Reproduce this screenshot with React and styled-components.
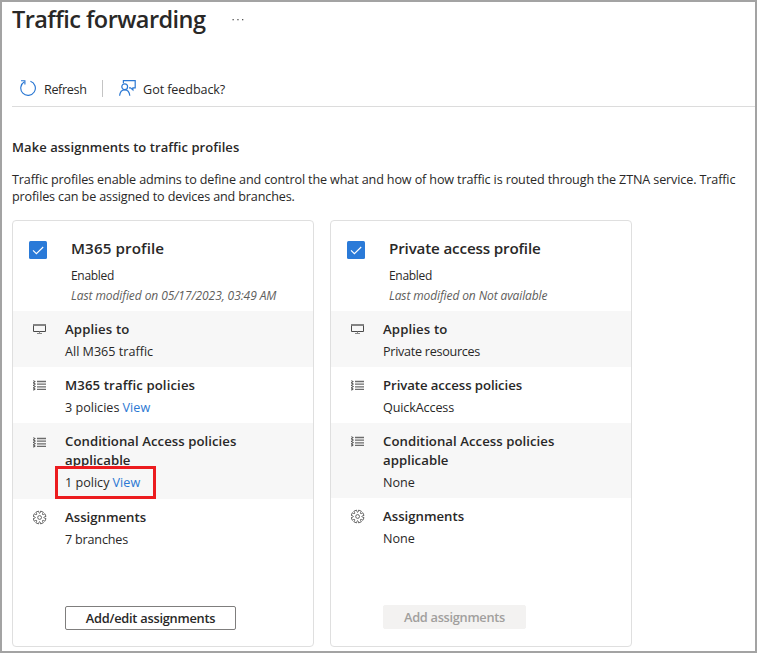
import React from 'react';
import styled, { createGlobalStyle } from 'styled-components';

const GlobalStyle = createGlobalStyle`
  * { box-sizing: border-box; }
  body { margin: 0; background: #fff; }
  button { font-family: inherit; }
`;

const Page = styled.main`
  width: 757px;
  height: 653px;
  border: 2px solid #a3a3a3;
  padding-left: 10px;
  overflow: hidden;
  color: #292827;
  font-family: 'Open Sans', 'Noto Sans', sans-serif;
`;

const Text = styled.span`
  display: block;
  white-space: nowrap;
  font-size: 12.6px;
  line-height: 18px;
  letter-spacing: ${(p) => p.$ls || 0}px;
`;

const TitleBar = styled.header`
  display: flex;
  height: 74px;
`;

const Title = styled.h1`
  margin: 0;
  width: 220px;
  font-size: 23.5px;
  line-height: 35px;
  font-weight: 600;
  letter-spacing: -0.56px;
  white-space: nowrap;
`;

const MoreIcon = styled.svg`
  display: block;
  margin-top: 16px;
`;

const Toolbar = styled.nav`
  display: flex;
  align-items: flex-start;
  height: 31px;
  padding: 3px 0 0 8px;
  border-bottom: 1px solid #dcdcdc;
`;

const ToolButton = styled.div`
  display: flex;
  gap: ${(p) => p.$gap}px;
  height: 18px;

  ${Text} { padding-top: 2px; }
  svg { display: block; flex: none; }
`;

const Divider = styled.div`
  width: 1px;
  height: 17px;
  margin: 1px 16px 0 15px;
  background: #c4c4c4;
`;

const SectionTitle = styled.h2`
  margin: 31px 0 15px;
  font-size: 13px;
  line-height: 18px;
  font-weight: 600;
  letter-spacing: 0.06px;
`;

const Intro = styled.div`
  ${Text} { line-height: 17px; }
`;

const Cards = styled.section`
  display: flex;
  gap: 16px;
  margin-top: 15px;
`;

const Card = styled.article`
  display: flex;
  flex-direction: column;
  width: 302px;
  height: 427px;
  border: 1px solid #dfdfdf;
  border-radius: 4px;
`;

const CardHeader = styled.div`
  display: flex;
  gap: 24px;
  height: 90px;
  padding: 17px 0 0 16px;
`;

const CheckBox = styled.div`
  width: 18px;
  height: 18px;
  margin-top: 3px;
  border-radius: 1.5px;
  background: #2a7ad8;

  svg { display: block; }
`;

const ProfileName = styled.h3`
  margin: 0 0 9px;
  font-size: 15.2px;
  line-height: 20px;
  font-weight: 600;
  white-space: nowrap;
  letter-spacing: ${(p) => p.$ls}px;
`;

const Status = styled(Text)`
  font-size: 12px;
`;

const Modified = styled(Text)`
  margin-top: 2px;
  font-size: 12px;
  font-style: italic;
  color: #605e5c;
`;

const Row = styled.div`
  display: flex;
  gap: 18px;
  padding: 9px 0 ${(p) => (p.$loose ? 7 : 6)}px 20px;
  background: ${(p) => (p.$shaded ? '#f7f7f7' : 'transparent')};
`;

const RowIcon = styled.svg`
  display: block;
  flex: none;
  margin-top: ${(p) => (p.$low ? 3 : 2)}px;
`;

const RowBody = styled.div`
  position: relative;
`;

const RowTitle = styled(Text)`
  font-size: 13.2px;
  line-height: 19px;
  font-weight: 600;
`;

const Value = styled.div`
  display: flex;
  gap: 3px;
  margin-top: 4px;
`;

const Link = styled(Text)`
  color: #2b78d3;
  letter-spacing: 0.1px;
`;

const Highlight = styled.div`
  position: absolute;
  left: -10px;
  bottom: -7px;
  width: 101px;
  height: 33px;
  border: 3px solid #ec1c1f;
`;

const ActionButton = styled.button`
  align-self: flex-start;
  width: ${(p) => (p.disabled ? 143 : 171)}px;
  height: 24px;
  margin: auto 0 ${(p) => (p.disabled ? 17 : 16)}px 52px;
  padding: 0;
  border: 1px solid ${(p) => (p.disabled ? '#f3f2f1' : '#7f7e7d')};
  border-radius: 2px;
  background: ${(p) => (p.disabled ? '#f3f2f1' : '#fff')};
  color: ${(p) => (p.disabled ? '#a19f9d' : '#292827')};
  font-size: 12.8px;
  line-height: 22px;
  font-weight: 600;
  letter-spacing: ${(p) => (p.disabled ? -0.3 : -0.24)}px;
`;

const RefreshIcon = () => (
  <svg width="16" height="18" viewBox="0 0 16 18" fill="none" stroke="#2b78d3" strokeWidth="1.15">
    <path d="M10.4 2.2a7.3 7.3 0 1 1-6 .6" />
    <path d="M1 1.7h3.9v3.9" />
  </svg>
);

const FeedbackIcon = () => (
  <svg width="17" height="18" viewBox="0 0 17 18" fill="none" stroke="#2b78d3" strokeWidth="1.2">
    <path d="M4.4 4.2V1.6h11.8v7.2h-2.3V11l-2.4-2.2H10" />
    <circle cx="5.7" cy="7.7" r="2.9" />
    <path d="M.6 16.8c.4-3.6 2.3-5.9 5.1-5.9s4.7 2.3 5.1 5.9" />
  </svg>
);

const MonitorIcon = () => (
  <RowIcon width="14" height="16" viewBox="0 0 14 16" fill="none">
    <path d="M.5 3v6.5h12V3" stroke="#4a4a4a" />
    <path d="M0 3h13" stroke="#777" strokeWidth="1.8" />
    <path d="M4 11.5h5M6.5 9.5v2" stroke="#888" />
  </RowIcon>
);

const ListIcon = ({ low }) => (
  <RowIcon $low={low} width="14" height="16" viewBox="0 0 14 16" fill="none">
    <path d="M4 3.5h9M4 6.2h9M4 8.8h9M4 11.4h9" stroke="#6c6c6c" strokeWidth="1.3" />
    <path
      d="M.3 2.6l1.6 1L.3 4.9l1.8 1.2L.3 7.4l1.8 1.2-1.8 1.3 1.6 1.1-1.6 1.2"
      stroke="#4f4f4f"
      strokeWidth="1.1"
    />
  </RowIcon>
);

const GEAR_PROFILE = [[-13, 6.5], [13, 6.5], [15, 4.8], [22.5, 4.2], [30, 4.8]];

const gearPoints = Array.from({ length: 8 }, (_, tooth) =>
  GEAR_PROFILE.map(([offset, radius]) => {
    const angle = ((tooth * 45 + 22.5 + offset) * Math.PI) / 180;
    return `${(6.6 + radius * Math.cos(angle)).toFixed(2)},${(7.5 + radius * Math.sin(angle)).toFixed(2)}`;
  }).join(' ')
).join(' ');

const GearIcon = () => (
  <RowIcon width="14" height="16" viewBox="0 0 14 16" fill="none" stroke="#505050" strokeWidth="0.85" strokeLinejoin="round">
    <polygon points={gearPoints} />
    <circle cx="6.6" cy="7.5" r="1.9" />
  </RowIcon>
);

const Profile = ({ name, nameLs, modified, modifiedLs, children }) => (
  <Card>
    <CardHeader>
      <CheckBox>
        <svg width="18" height="18" viewBox="0 0 18 18" fill="none">
          <path d="M4 9.3l3.4 3.4L14.2 6" stroke="#fff" strokeWidth="1.1" />
        </svg>
      </CheckBox>
      <div>
        <ProfileName $ls={nameLs}>{name}</ProfileName>
        <Status $ls={-0.3}>Enabled</Status>
        <Modified $ls={modifiedLs}>{modified}</Modified>
      </div>
    </CardHeader>
    {children}
  </Card>
);

const Detail = ({ icon, title, titleLs, value, valueLs, link, shaded, loose, highlighted }) => (
  <Row $shaded={shaded} $loose={loose}>
    {icon}
    <RowBody>
      {title.map((line) => (
        <RowTitle key={line} $ls={titleLs}>{line}</RowTitle>
      ))}
      <Value>
        <Text $ls={valueLs}>{value}</Text>
        {link && <Link>View</Link>}
      </Value>
      {highlighted && <Highlight />}
    </RowBody>
  </Row>
);

const conditionalTitle = ['Conditional Access policies', 'applicable'];

export default function App() {
  return (
    <Page>
      <GlobalStyle />
      <TitleBar>
        <Title>Traffic forwarding</Title>
        <MoreIcon width="12" height="4" viewBox="0 0 12 4" fill="#555">
          <rect x="0.5" y="1" width="1.3" height="1.3" />
          <rect x="5.3" y="1" width="1.3" height="1.3" />
          <rect x="10" y="1" width="1.3" height="1.3" />
        </MoreIcon>
      </TitleBar>
      <Toolbar>
        <ToolButton $gap={8}>
          <RefreshIcon />
          <Text $ls={-0.36}>Refresh</Text>
        </ToolButton>
        <Divider />
        <ToolButton $gap={7.6}>
          <FeedbackIcon />
          <Text $ls={-0.1}>Got feedback?</Text>
        </ToolButton>
      </Toolbar>
      <SectionTitle>Make assignments to traffic profiles</SectionTitle>
      <Intro>
        <Text $ls={-0.135}>
          Traffic profiles enable admins to define and control the what and how of how traffic is routed through the ZTNA service. Traffic
        </Text>
        <Text $ls={-0.14}>profiles can be assigned to devices and branches.</Text>
      </Intro>
      <Cards>
        <Profile name="M365 profile" nameLs={0.1} modified="Last modified on 05/17/2023, 03:49 AM" modifiedLs={-0.08}>
          <Detail icon={<MonitorIcon />} title={['Applies to']} titleLs={0.12} value="All M365 traffic" shaded />
          <Detail icon={<ListIcon />} title={['M365 traffic policies']} titleLs={0.11} value="3 policies" link />
          <Detail icon={<ListIcon low />} title={conditionalTitle} titleLs={0.04} value="1 policy" link shaded loose highlighted />
          <Detail icon={<GearIcon />} title={['Assignments']} titleLs={0} value="7 branches" valueLs={-0.19} />
          <ActionButton>Add/edit assignments</ActionButton>
        </Profile>
        <Profile name="Private access profile" nameLs={-0.16} modified="Last modified on Not available" modifiedLs={-0.11}>
          <Detail icon={<MonitorIcon />} title={['Applies to']} titleLs={0.12} value="Private resources" valueLs={-0.28} shaded />
          <Detail icon={<ListIcon />} title={['Private access policies']} titleLs={-0.08} value="QuickAccess" valueLs={-0.12} />
          <Detail icon={<ListIcon />} title={conditionalTitle} titleLs={0.04} value="None" shaded />
          <Detail icon={<GearIcon />} title={['Assignments']} titleLs={0} value="None" />
          <ActionButton disabled>Add assignments</ActionButton>
        </Profile>
      </Cards>
    </Page>
  );
}
